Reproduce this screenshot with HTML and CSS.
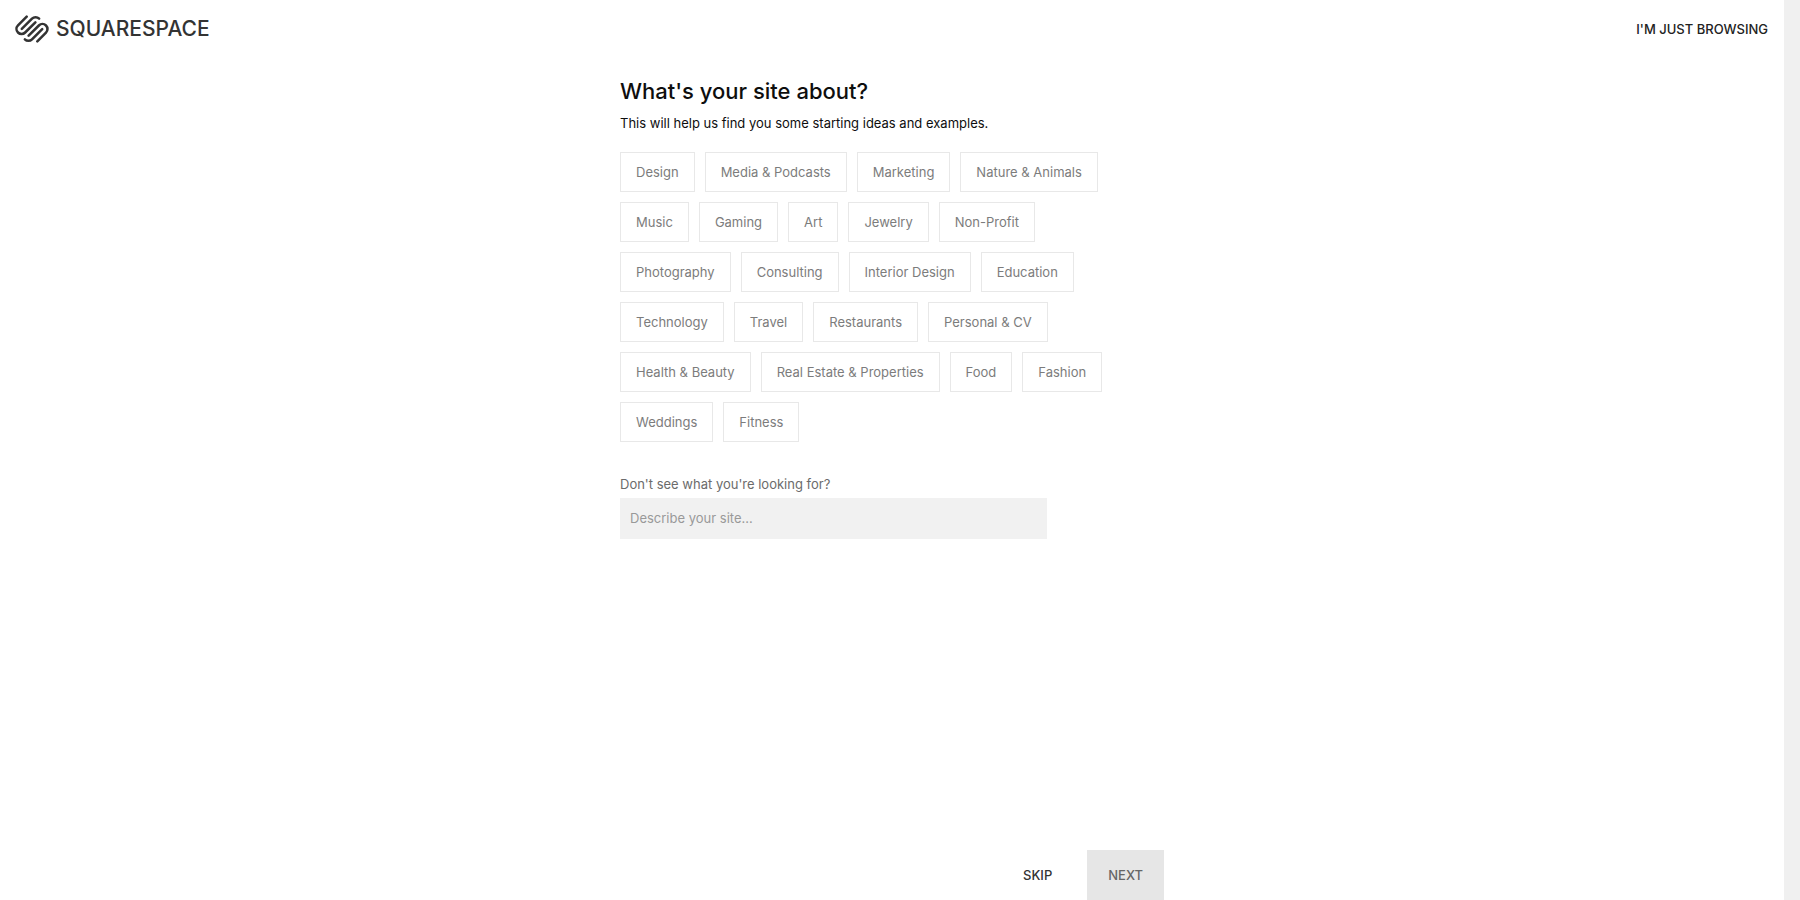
FILE: index.html
```html
<!DOCTYPE html>
<html lang="en">
<head>
<meta charset="utf-8">
<title>What's your site about?</title>
<link rel="stylesheet" href="styles.css">
</head>
<body>
<div class="page">
  <header class="header">
    <a class="logo" href="#">
      <svg class="logo-mark" viewBox="0 2 24 20" aria-hidden="true">
        <path d="M8.2 3.2 2 9.4a3.6 3.6 0 0 0 5.1 5.1L14.4 7.2"/>
        <path d="M4.7 11.9 12 4.6a3.6 3.6 0 0 1 5.1 0"/>
        <path d="M15.8 20.8 22 14.6a3.6 3.6 0 0 0-5.1-5.1L9.6 16.8"/>
        <path d="M19.3 12.1 12 19.4a3.6 3.6 0 0 1-5.1 0"/>
      </svg>
      <span class="logo-name">SQUARESPACE</span>
    </a>
    <a class="browse" href="#">I'M JUST BROWSING</a>
  </header>
  <main class="content">
    <h1 class="title">What's your site about?</h1>
    <p class="subtitle">This will help us find you some starting ideas and examples.</p>
    <div class="topics">
      <button class="topic" type="button">Design</button>
      <button class="topic" type="button">Media &amp; Podcasts</button>
      <button class="topic" type="button">Marketing</button>
      <button class="topic" type="button">Nature &amp; Animals</button>
      <button class="topic" type="button">Music</button>
      <button class="topic" type="button">Gaming</button>
      <button class="topic" type="button">Art</button>
      <button class="topic" type="button">Jewelry</button>
      <button class="topic" type="button">Non-Profit</button>
      <button class="topic" type="button">Photography</button>
      <button class="topic" type="button">Consulting</button>
      <button class="topic" type="button">Interior Design</button>
      <button class="topic" type="button">Education</button>
      <button class="topic" type="button">Technology</button>
      <button class="topic" type="button">Travel</button>
      <button class="topic" type="button">Restaurants</button>
      <button class="topic" type="button">Personal &amp; CV</button>
      <button class="topic" type="button">Health &amp; Beauty</button>
      <button class="topic" type="button">Real Estate &amp; Properties</button>
      <button class="topic" type="button">Food</button>
      <button class="topic" type="button">Fashion</button>
      <button class="topic" type="button">Weddings</button>
      <button class="topic" type="button">Fitness</button>
    </div>
    <label class="label" for="describe">Don't see what you're looking for?</label>
    <input class="field" id="describe" type="text" placeholder="Describe your site...">
  </main>
  <footer class="actions">
    <button class="action" type="button">SKIP</button>
    <button class="action action-next" type="button">NEXT</button>
  </footer>
</div>
<div class="gutter"></div>
</body>
</html>
```
FILE: styles.css
```css
* {
  box-sizing: border-box;
}

body {
  margin: 0;
  min-height: 100vh;
  display: flex;
  background: #fff;
  color: #0e0e0e;
  font-family: Inter, "Liberation Sans", sans-serif;
  font-size: 13px;
  line-height: 20px;
}

button,
input {
  font: inherit;
}

.page {
  flex: 1;
  display: flex;
  flex-direction: column;
}

.gutter {
  width: 16px;
  background: #f0f0f0;
}

.header {
  display: flex;
  justify-content: space-between;
  align-items: center;
  padding: 15px 16px 0 15px;
}

.logo {
  display: flex;
  align-items: center;
  gap: 7px;
  color: #333;
  text-decoration: none;
}

.logo-mark {
  width: 34px;
  height: 28px;
  fill: none;
  stroke: currentColor;
  stroke-width: 1.8;
  stroke-linecap: round;
}

.logo-name {
  font-size: 21px;
  font-weight: 500;
  line-height: 28px;
}

.browse {
  color: #222;
  font-weight: 500;
  text-decoration: none;
}

.content,
.actions {
  width: 100%;
  max-width: 544px;
  margin: 0 auto;
}

.content {
  flex: 1;
  padding-top: 32px;
}

.title {
  margin: 0;
  font-size: 22px;
  font-weight: 500;
  line-height: 32px;
}

.subtitle {
  margin: 6px 0 19px;
}

.topics {
  display: flex;
  flex-wrap: wrap;
  gap: 10px;
  max-width: 500px;
}

.topic {
  height: 40px;
  padding: 0 15px 1px;
  border: 1px solid #e8e8e8;
  background: #fff;
  color: #7c7c7c;
}

.label {
  display: block;
  margin: 32px 0 4px;
  color: #6b6b6b;
}

.field {
  display: block;
  width: 427px;
  max-width: 100%;
  height: 41px;
  padding: 0 10px 2px;
  border: 0;
  background: #f1f1f1;
  color: #222;
}

.field::placeholder {
  color: #999;
  opacity: 1;
}

.actions {
  display: flex;
  justify-content: flex-end;
}

.action {
  height: 50px;
  padding: 0 21px;
  border: 0;
  background: none;
  color: #333;
  font-weight: 500;
}

.action-next {
  margin-left: 14px;
  background: #e6e6e6;
  color: #666;
}
```
